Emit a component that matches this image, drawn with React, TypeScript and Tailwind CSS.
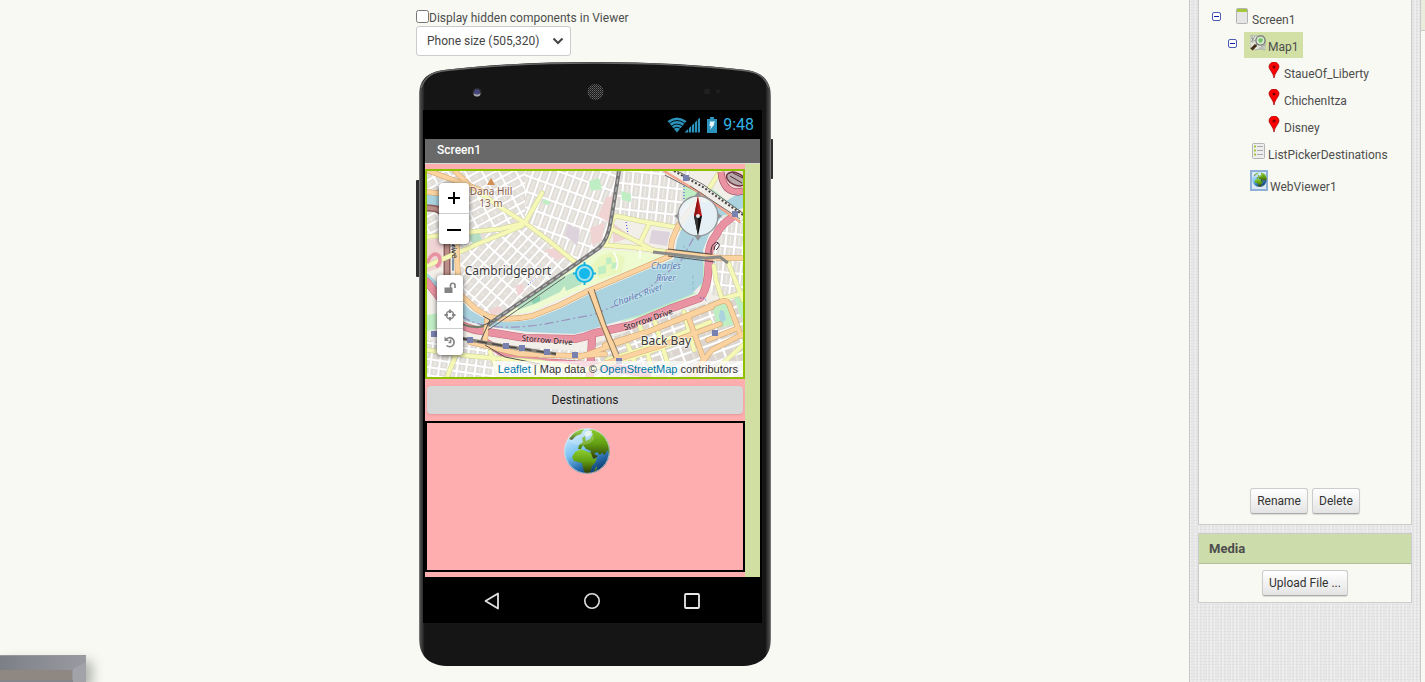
import React from "react";

function PhoneShell() {
  return (
    <svg viewBox="416 62 357 604" className="absolute inset-0 h-full w-full" aria-hidden="true">
      <defs>
        <linearGradient id="shell-edge" x1="0" x2="1" y1="0" y2="0">
          <stop offset="0" stopColor="#8a8a8a" />
          <stop offset="0.004" stopColor="#4a4a4a" />
          <stop offset="0.012" stopColor="#2a2a2a" />
          <stop offset="0.016" stopColor="#151515" />
          <stop offset="0.984" stopColor="#151515" />
          <stop offset="0.988" stopColor="#2a2a2a" />
          <stop offset="0.996" stopColor="#4a4a4a" />
          <stop offset="1" stopColor="#8a8a8a" />
        </linearGradient>
        <pattern id="speaker" width="2" height="2" patternUnits="userSpaceOnUse">
          <rect width="2" height="2" fill="#181818" />
          <rect width="1" height="1" fill="#6a6a6a" />
          <rect x="1" y="1" width="1" height="1" fill="#4a4a4a" />
        </pattern>
      </defs>
      <rect x="416" y="180" width="4" height="97" rx="1" fill="#2e2e2e" />
      <rect x="769" y="139" width="4" height="40" rx="1" fill="#2e2e2e" />
      <path
        d="M419 96C419 80 427 72 444 70Q510 62 595 62Q680 62 746 70C763 72 771 82 771 96V638C771 655 762 665 744 666H446C428 665 419 655 419 638Z"
        fill="url(#shell-edge)"
      />
      <path d="M421 88C425 76 433 72 446 70.500Q512 63 595 63Q678 63 744 70.500C757 72 765 76 769 88" fill="none" stroke="#666" strokeWidth="1.500" />
      <circle cx="477" cy="92.500" r="4.500" fill="#2c2c30" />
      <circle cx="477" cy="92" r="2.800" fill="#45457e" />
      <path d="M473.500 93A3.500 3.500 0 0 0 480.500 93Q477 96 473.500 93Z" fill="#a9a9b4" />
      <circle cx="595.500" cy="92" r="8" fill="url(#speaker)" />
      <circle cx="707" cy="91.500" r="3" fill="#202020" />
      <circle cx="718" cy="91.500" r="2" fill="#202020" />
    </svg>
  );
}

const YELLOW_ROADS = [
  "M470 186L500 207L525 223L548 240L576 263",
  "M542 193L534 207L525 223",
  "M525 223L500 229L470 232L427 237",
  "M522 226L480 243L427 266",
  "M680 228L640 221L617 216Q611 217 611 230L605 245",
  "M610 228L640 243L654 251",
  "M649 224L640 243",
  "M605 245L630 247L668 252",
  "M720 171L707 192",
  "M743 293L722 299L716 280L714 266",
  "M728 262L743 300",
  "M628 345L634 360",
  "M607 360L640 350L710 322",
  "M585 370L630 358L690 338",
  "M655 322L668 365",
  "M684 312L694 350",
  "M640 326L654 377",
  "M710 375L743 345",
  "M447 377L458 350",
  "M427 350L470 356L540 362L580 368",
  "M490 352L500 377",
  "M540 362L536 377",
];

const ORANGE_ROADS = [
  "M429 171L480 190",
  "M455 171L470 186",
  "M427 192L444 194L456 225L458 280",
  "M463 297L476 309L489 317Q510 321 532 316L560 305L588 291L642 268L670 256L672 240L678 226L700 197",
  "M668 252L700 256L720 258L743 258",
  "M591 290L603 325L617 358",
  "M487 319L485 342",
  "M580 357L640 335L720 302Q726 299 729 304L741 336",
  "M605 345L650 331L712 307",
  "M688 316L704 360",
  "M708 340L738 328",
  "M600 365L660 346L720 324",
  "M690 377L712 350L743 334",
  "M470 342L520 354L577 356L605 354",
];

const PINK_ROADS = [
  "M427 282L440 298L452 318Q462 329 488 332L525 338L575 339Q586 337 595 333L632 325L672 308L700 298Q706 292 708 275L709 258Q708 245 716 235Q722 222 738 214",
  "M485 342L505 354L540 362L600 366L650 374",
  "M592 338L590 377",
];

const STATIONS = [
  [434, 334], [470, 340], [506, 346], [522, 348], [547, 352], [575, 355],
  [619, 361], [715, 333], [686, 178], [735, 214],
];

const RAILWAY = "M619 171L611 220Q608 240 599 248L560 275L502 315L488 325";

function StreetPattern({ id, angle, w, h, fill = "#e3dfda" }: { id: string; angle: number; w: number; h: number; fill?: string }) {
  return (
    <pattern id={id} width={w} height={h} patternUnits="userSpaceOnUse" patternTransform={`rotate(${angle})`}>
      <rect width={w} height={h} fill="#fff" />
      <rect x="1.400" y="1.400" width={w - 2.800} height={h - 2.800} fill={fill} stroke="#cfcbc5" strokeWidth="0.500" />
      <path d={`M${w / 2} 2V${h - 2}`} stroke="#f2efe9" strokeWidth="1" />
    </pattern>
  );
}

function MapDrawing() {
  return (
    <svg viewBox="427 171 316 206" preserveAspectRatio="xMidYMid slice" className="absolute inset-0 h-full w-full" role="img" aria-label="Map of Cambridgeport and Back Bay">
      <defs>
        <StreetPattern id="st-west" angle={-48} w={16} h={8} />
        <StreetPattern id="st-mid" angle={20} w={8} h={15} />
        <StreetPattern id="st-north" angle={-28} w={15} h={8} />
        <StreetPattern id="st-grid" angle={6} w={9} h={13} />
        <StreetPattern id="st-bay" angle={-20} w={20} h={9} fill="#dcd5cf" />
        <StreetPattern id="st-south" angle={8} w={9} h={8} />
      </defs>
      <rect x="427" y="171" width="316" height="206" fill="#f2efe9" />
      <path d="M427 171H530L525 223L427 237Z" fill="url(#st-north)" />
      <path d="M525 171H619L608 245L578 264L525 223Z" fill="url(#st-mid)" />
      <path d="M458 237L525 223L578 264L490 322L458 290Z" fill="url(#st-west)" />
      <path d="M619 171H690L680 227L613 217Z" fill="url(#st-grid)" />
      <path d="M427 340L590 352V377H427Z" fill="url(#st-south)" />
      <path d="M590 345L743 290V377H590Z" fill="url(#st-bay)" />
      <path d="M715 218L743 212V300L712 295L707 262Z" fill="url(#st-grid)" />

      <g fill="#f0d4d3">
        <path d="M606 197L614 196L611 224L598 216Z" />
        <path d="M590 228L605 222L602 241L592 245Z" />
        <path d="M613 223L632 237L613 243Z" />
        <path d="M544 250L560 247L570 256L556 260Z" />
        <path d="M427 240L443 238L442 267L427 272Z" />
        <path d="M515 286L523 283L524 291L518 296Z" />
        <path d="M722 171H743V191L728 185Z" />
        <path d="M488 310L500 306L503 311L492 316Z" />
      </g>
      <g fill="#ddd3dc">
        <path d="M568 224L580 230L577 246L565 235Z" />
        <path d="M652 230L670 232L667 246L649 243Z" />
      </g>
      <path d="M567 268L605 249L640 252L664 256L640 266L588 287L530 312L502 316Z" fill="#eefad0" />
      <path d="M600 256L612 252L625 257L622 272L600 279L590 268Z" fill="#e9f6bd" />
      <g fill="#c0eec4">
        <path d="M589 181L599 178L602 189L591 191Z" />
        <path d="M544 199L551 202L548 205L542 203Z" />
        <path d="M621 191L631 194V202L622 200Z" />
        <path d="M683 182L707 190L697 205L684 203Z" />
        <path d="M640 312L690 292L697 293L672 304L640 317L620 322Z" />
        <path d="M703 250L705 282L700 290L701 262Z" />
        <path d="M708 185L738 210L728 217L706 202Z" />
        <path d="M712 305L730 300L737 324L717 328Z" />
        <path d="M734 297L743 295V317L740 316Z" />
        <path d="M427 315L440 313L446 327L427 331Z" />
        <path d="M606 258L611 257L612 263L606 265ZM598 267L606 265V273L598 275ZM612 263L618 262L617 268L611 269Z" />
      </g>
      <path d="M470 235L479 232L482 240L475 244L470 241Z" fill="#b6dfc6" />
      <g fill="#b5e3c3">
        <path d="M517 302L560 278L568 281L560 292L535 304L518 310Z" />
        <path d="M562 277L574 272L582 284L566 291Z" />
      </g>
      <path d="M531 300L540 296L540 301L533 304Z" fill="#86cfae" />

      <path
        d="M427 273L445 290L457 296L470 310L487 320Q510 325 534 319L562 308L590 294L644 271L674 259L677 240L682 228L700 202L722 204L743 190V208L722 216L710 232L703 250L703 282L692 294L640 315L605 325L590 330L575 334L528 332L486 326L465 321L448 302L427 280Z"
        fill="#aad3df"
      />
      <path d="M427 193L438 193L444 199V208L427 212Z" fill="#aad3df" />
      <path d="M720 310L724 311L726 320L721 323L719 317Z" fill="#aad3df" />
      <path d="M462 316Q475 326 500 327Q530 328 560 321L592 315L625 302L650 287L680 262L697 232" fill="none" stroke="#9c91bd" strokeWidth="1.200" strokeDasharray="9 3 2 3" />
      <path d="M684 260V245M693 275V290" stroke="#7fb4c8" strokeWidth="0.700" strokeDasharray="4 2" />

      <g fill="none" strokeLinecap="round" strokeLinejoin="round">
        <path d="M427 208Q441 207 445 217L447 240V285" stroke="#8e5f5c" strokeWidth="7" />
        <path d="M427 208Q441 207 445 217L447 240V285" stroke="#b98d88" strokeWidth="4" />
        <path d="M453 225V270" stroke="#7d93a8" strokeWidth="2" />
        {PINK_ROADS.map((d) => <path key={d} d={d} stroke="#c46a80" strokeWidth="8" />)}
        {PINK_ROADS.map((d) => <path key={d + "f"} d={d} stroke="#e892a2" strokeWidth="7" />)}
        {YELLOW_ROADS.map((d) => <path key={d} d={d} stroke="#cdd096" strokeWidth="5" />)}
        {YELLOW_ROADS.map((d) => <path key={d + "f"} d={d} stroke="#f5f8b6" strokeWidth="4" />)}
        {ORANGE_ROADS.map((d) => <path key={d} d={d} stroke="#cfa268" strokeWidth="5.500" />)}
        {ORANGE_ROADS.map((d) => <path key={d + "f"} d={d} stroke="#fbd3a0" strokeWidth="4.500" />)}
      </g>

      <g fill="none">
        <path d="M667 171L700 188L743 219" stroke="#555" strokeWidth="10" />
        <path d="M667 171L700 188L743 219" stroke="#f0ede8" strokeWidth="8.500" />
        <path d="M664 171L700 193L740 222" stroke="#f3a58f" strokeWidth="2.500" />
        <path d="M674 171L703 187L743 215" stroke="#444" strokeWidth="2" strokeDasharray="2 2" />
        <path d="M690 186L740 219" stroke="#555" strokeWidth="0.800" />
        <path d={RAILWAY} stroke="#777" strokeWidth="4" />
        <path d={RAILWAY} stroke="#b9b9b9" strokeWidth="1.200" strokeDasharray="5 3" />
        <path d="M565 277L500 322L488 330" stroke="#666" strokeWidth="1" />
        <path d="M653 252L705 258L720 257L728 263" stroke="#8a8a86" strokeWidth="3" />
        <path d="M668 249L710 254M668 256L715 262" stroke="#333" strokeWidth="0.800" />
        <path d="M588 291L601 325L614 358M594 289L606 325L619 354" stroke="#6b5a45" strokeWidth="0.800" />
        <path d="M433 333L470 340L510 347L556 354" stroke="#8a837a" strokeWidth="3.500" />
        <path d="M433 333L470 340L510 347L556 354" stroke="#4a4642" strokeWidth="1.500" strokeDasharray="10 5" />
        <path d="M485 345L505 357L540 364" stroke="#555" strokeWidth="1" />
        <path d="M483 316L490 320L481 340M476 328L494 321" stroke="#555" strokeWidth="1" />
        <path d="M452 318Q468 330 484 326" stroke="#6c7f66" strokeWidth="2" />
        <path d="M721 172Q723 192 738 192L743 191" stroke="#8c3d52" strokeWidth="7" />
        <path d="M721 172Q723 192 738 192L743 191" stroke="#e892a2" strokeWidth="6" />
        <ellipse cx="736" cy="179" rx="10" ry="6" transform="rotate(25 736 179)" stroke="#6b3341" strokeWidth="1.500" fill="#b9a9ac" />
        <path d="M730 176L742 183M733 173L743 178" stroke="#4b2932" strokeWidth="1" />
        <path d="M711 255Q710 244 717 242Q722 245 716 250M714 250Q714 245 718 243" stroke="#4f3340" strokeWidth="1" />
        <path d="M427 263Q433 250 439 256Q442 263 436 267" stroke="#e892a2" strokeWidth="3.500" />
        <path d="M684 186V205M626 222L628 234M700 298Q706 297 706 302M528 285L536 278" stroke="#3540e0" strokeWidth="1" strokeDasharray="1 2" />
        <path d="M613 252Q620 260 616 270M640 250V258" stroke="#fff" strokeWidth="1.500" />
      </g>
      {STATIONS.map(([x, y]) => (
        <rect key={`${x}-${y}`} x={x - 3} y={y - 3} width="6" height="6" fill="#7981b0" />
      ))}

      <path d="M491 178L495 185H487Z" fill="#d08f55" />
      <g fontFamily="'Noto Sans', sans-serif" textAnchor="middle" stroke="#fff" strokeOpacity="0.600" strokeWidth="2" paintOrder="stroke">
        <text x="491" y="195" fontSize="10" fill="#8a5b48">Dana Hill</text>
        <text x="491" y="207" fontSize="10" fill="#8a5b48">13 m</text>
        <text x="508" y="275" fontSize="12" fill="#3a3a3a">Cambridgeport</text>
        <text x="666" y="345" fontSize="12" fill="#3a3a3a">Back Bay</text>
        <g fontSize="8" fill="#222" strokeOpacity="0.200">
          <text transform="translate(547 343) rotate(5)">Storrow Drive</text>
          <text transform="translate(649 322) rotate(-19)">Storrow Drive</text>
          <text transform="translate(451 249) rotate(82)">Drive</text>
        </g>
        <g fontSize="9" fontStyle="italic" fill="#5b7fb8" strokeOpacity="0.300">
          <text x="666" y="269">Charles</text>
          <text x="666" y="281">River</text>
          <text transform="translate(639 298) rotate(-20)">Charles River</text>
        </g>
      </g>

      <circle cx="584.500" cy="273.500" r="8.500" fill="#8fdcf2" fillOpacity="0.800" stroke="#14b4e4" strokeWidth="2" />
      <circle cx="584.500" cy="273.500" r="5.500" fill="#14b8ea" />
      <path d="M584.500 262V266M584.500 281V285M573 273.500H577M592 273.500H596" stroke="#14b4e4" strokeWidth="2" />

      <g>
        <path d="M674 216L680 212V220ZM722 216L716 212V220ZM698 241L694 235H702ZM698 191L694 197H702Z" fill="#929292" />
        <circle cx="698" cy="216" r="20" fill="#eff5f9" fillOpacity="0.850" stroke="#909396" strokeWidth="1.300" />
        <path d="M698 196L702 216H694Z" fill="#b51a1a" />
        <path d="M698 196V216H694Z" fill="#8f1414" />
        <path d="M698 236L702 216H694Z" fill="#111" />
        <path d="M698 236V216H694Z" fill="#333" />
        <circle cx="698" cy="216" r="2" fill="#e8e8e8" />
      </g>
    </svg>
  );
}

function MapView() {
  const tool = "flex h-[26px] items-center justify-center bg-white text-[#848484]";
  return (
    <div className="relative h-[210px] overflow-hidden border-2 border-[#8fc000]">
      <MapDrawing />
      <div className="absolute left-3 top-3 flex w-[30px] flex-col gap-px overflow-hidden rounded bg-[#ccc] shadow-[0_1px_5px_rgba(0,0,0,0.65)]">
        <button aria-label="Zoom in" className="flex h-[30px] items-center justify-center bg-white">
          <svg width="14" height="14" viewBox="0 0 14 14" stroke="#000" strokeWidth="2"><path d="M1 7H13M7 1V13" /></svg>
        </button>
        <button aria-label="Zoom out" className="flex h-[30px] items-center justify-center bg-white">
          <svg width="14" height="14" viewBox="0 0 14 14" stroke="#000" strokeWidth="2"><path d="M0 8H14" /></svg>
        </button>
      </div>
      <div className="absolute left-[10px] top-[104px] flex w-[26px] flex-col gap-px overflow-hidden rounded-sm bg-[#ccc] shadow-[0_1px_5px_rgba(0,0,0,0.65)]">
        <button aria-label="Unlock" className={tool}>
          <svg width="12" height="12" viewBox="0 0 12 12" fill="none" stroke="currentColor" strokeWidth="1.700">
            <rect x="0.500" y="5.500" width="8" height="5.500" fill="currentColor" stroke="none" />
            <path d="M6.500 6V3.500A2.200 2.200 0 0 1 11 3.500V6" />
          </svg>
        </button>
        <button aria-label="Center" className={tool}>
          <svg width="12" height="12" viewBox="0 0 12 12" fill="none" stroke="currentColor" strokeWidth="2">
            <circle cx="6" cy="6" r="3.700" strokeWidth="1.500" />
            <path d="M6 0.500V4M6 8V11.500M0.500 6H4M8 6H11.500" />
          </svg>
        </button>
        <button aria-label="Reset" className={tool}>
          <svg width="12" height="12" viewBox="0 0 12 12" fill="none" stroke="currentColor" strokeWidth="1.700">
            <path d="M2 3.500A4.500 4.500 0 1 1 2.500 9.500M6.500 3.500V6.500H4.500" />
            <path d="M0.500 0.500V5H5Z" fill="currentColor" stroke="none" />
          </svg>
        </button>
      </div>
      <p className="absolute bottom-0 right-0 whitespace-nowrap bg-white/70 px-[5px] font-['Liberation_Sans',sans-serif] text-[11px] leading-4 text-[#333]">
        <a href="#leaflet" className="text-[#0078a8]">Leaflet</a> | Map data ©{" "}
        <a href="#osm" className="text-[#0078a8]">OpenStreetMap</a> contributors
      </p>
    </div>
  );
}

interface GlobeProps extends React.SVGProps<SVGSVGElement> {
  id: string;
}

function Globe({ id, ...rest }: GlobeProps) {
  return (
    <svg viewBox="0 0 46 46" aria-hidden="true" {...rest}>
      <defs>
        <linearGradient id={`${id}-sea`} x1="0.200" y1="0" x2="0.700" y2="1">
          <stop offset="0" stopColor="#d9f1ff" />
          <stop offset="0.450" stopColor="#7cc3f3" />
          <stop offset="0.750" stopColor="#2a6fae" />
          <stop offset="1" stopColor="#08305f" />
        </linearGradient>
        <linearGradient id={`${id}-land`} x1="0" y1="0" x2="0" y2="1">
          <stop offset="0" stopColor="#8fd030" />
          <stop offset="0.500" stopColor="#62a012" />
          <stop offset="1" stopColor="#2f3a08" />
        </linearGradient>
        <clipPath id={`${id}-clip`}><circle cx="23" cy="23" r="22.500" /></clipPath>
      </defs>
      <circle cx="23" cy="23" r="22.800" fill={`url(#${id}-sea)`} />
      <g clipPath={`url(#${id}-clip)`} fill={`url(#${id}-land)`}>
        <path d="M25 2L34 0L46 10V28L43 22L41 27L38 25L36 27L33 24L30 26L34 28L30 31L26 26L27 23L22 21L19 17L17 21H14L15 17L19 14L18 10L21 8L22 13L26 11L29 6Z" />
        <path d="M11 24L17 21L24 24L27 25L29 31L33 30L31 35L28 38L26 45H21L19 40L18 35L10 33L8 29Z" />
        <path d="M5 11L11 3L20 1L17 6L12 8L8 12Z" />
        <path d="M31 41L33 38L32 43L30 44Z" />
        <path d="M20 6L24 2L28 3L27 7L23 9Z" fill="#dff0ee" />
      </g>
      <ellipse cx="17" cy="10" rx="13" ry="7" fill="#fff" opacity="0.200" />
      <circle cx="23" cy="23" r="22.300" fill="none" stroke="#e4f0e6" strokeOpacity="0.600" />
    </svg>
  );
}

function StatusBar() {
  return (
    <div className="flex h-[29px] items-center justify-end pr-2 text-[#33b5e5]">
      <svg width="34" height="16" viewBox="0 0 34 16" aria-hidden="true">
        <path d="M10 15.500L0.500 4Q10 -3 19.500 4Z" fill="#2b93bb" />
        <path d="M2 6.500Q10 0.500 18 6.500M4 9.500Q10 4.500 16 9.500M6 12Q10 8.500 14 12" fill="none" stroke="#000" strokeWidth="0.900" />
        <path d="M17.500 15.500L33 0.500V15.500Z" fill="#2b93bb" />
        <path d="M21.500 16V8M24.500 16V6M27.500 16V3M30.500 16V0" stroke="#000" strokeWidth="0.800" />
      </svg>
      <svg width="10" height="16" viewBox="0 0 10 16" className="ml-[6px]" aria-hidden="true">
        <path d="M3 0H7V2H10V16H0V2H3Z" fill="#2b93bb" />
        <path d="M3 4.500H8L6.500 7.500H7.500L3 12.500L4 9H2.500Z" fill="#e8f6fb" />
      </svg>
      <span className="ml-[6px] text-[16px] leading-5">9:48</span>
    </div>
  );
}

function NavBar() {
  const key = "flex h-6 w-6 items-center justify-center";
  return (
    <div className="flex h-[46px] items-center justify-center gap-[76px] pr-px pt-px">
      <button aria-label="Back" className={key}>
        <svg width="16" height="18" viewBox="0 0 16 18" fill="none" stroke="#e0e0e0" strokeWidth="1.800"><path d="M14 1.500V16.500L1.500 9Z" strokeLinejoin="round" /></svg>
      </button>
      <button aria-label="Home" className={key}>
        <svg width="18" height="18" viewBox="0 0 18 18" fill="none" stroke="#e0e0e0" strokeWidth="1.600"><circle cx="9" cy="9" r="7.200" /></svg>
      </button>
      <button aria-label="Overview" className={key}>
        <svg width="18" height="18" viewBox="0 0 18 18" fill="none" stroke="#e8e8e8" strokeWidth="1.800"><rect x="2" y="2" width="14" height="14" rx="1" /></svg>
      </button>
    </div>
  );
}

function Phone() {
  return (
    <div className="relative mt-[6px] px-[7px] pb-[43px] pt-12">
      <PhoneShell />
      <div className="relative mr-1 bg-black">
        <StatusBar />
        <div className="mx-[2px]">
          <h1 className="h-6 bg-[#696969] pl-3 text-[12px] font-medium leading-[22px] text-white">Screen1</h1>
          <div className="border-t border-[#dcdcd4] bg-[#d2dfa2] pr-[15px]">
            <div className="flex flex-col bg-[#ffaeb0] pb-[5px] pt-[5px]">
              <MapView />
              <button className="mx-[2px] mb-[7px] mt-[7px] h-7 rounded-sm bg-[#d6d7d7] text-[12px] leading-7 text-[#222] shadow-sm">
                Destinations
              </button>
              <div className="flex h-[151px] justify-center border-2 border-black pl-1 pt-[5px]">
                <Globe id="view-globe" className="h-[46px] w-[46px]" />
              </div>
            </div>
          </div>
        </div>
        <NavBar />
      </div>
    </div>
  );
}

function Toggle({ label }: { label: string }) {
  return (
    <button aria-label={label} className="mt-[7px] h-[9px] w-[9px] shrink-0">
      <svg width="9" height="9" viewBox="0 0 9 9">
        <rect x="0.500" y="0.500" width="8" height="8" rx="1.500" fill="#fff" stroke="#4a5cb4" />
        <path d="M2 4.500H7" stroke="#1020b0" />
      </svg>
    </button>
  );
}

const ScreenIcon = () => (
  <svg width="16" height="16" viewBox="0 0 16 16">
    <rect x="2.500" y="0.500" width="11" height="15" rx="1" fill="#e6e6e6" stroke="#b4b4b4" />
    <rect x="3" y="1" width="10" height="3" fill="#a6c639" />
  </svg>
);

const MapIcon = () => (
  <svg width="16" height="16" viewBox="0 0 16 16">
    <path d="M0 1L4 0L8 1L13 0L15 5V15L10 14L5 15L0 13Z" fill="#e2e4d8" stroke="#999" strokeWidth="0.600" />
    <path d="M1 3L5 6M2 1L3 8M5 1L1 7M11 12L15 10M9 13L14 13" stroke="#8a9288" strokeWidth="0.800" />
    <circle cx="10.500" cy="5.500" r="4.600" fill="#d3e9c8" stroke="#777" strokeWidth="1.300" />
    <path d="M8 5L10 3L13 4L12 7L10 8Z" fill="#73c06b" />
    <path d="M7.500 8.500L5.500 11" stroke="#888" strokeWidth="2" />
    <path d="M6 10L1.500 14.500" stroke="#4a2e18" strokeWidth="3" />
  </svg>
);

const PinIcon = () => (
  <svg width="16" height="16" viewBox="0 0 16 16">
    <path d="M8 16Q7.500 12.500 5 9Q3 6.500 3 4.800A5 4.800 0 0 1 13 4.800Q13 6.500 11 9Q8.500 12.500 8 16Z" fill="#f00" stroke="#9c0000" strokeWidth="0.700" />
    <circle cx="8" cy="5" r="1.600" fill="#7c0000" />
  </svg>
);

const ListIcon = () => (
  <svg width="16" height="16" viewBox="0 0 16 16">
    <rect x="2.500" y="0.500" width="12" height="15" rx="1" fill="#eee" stroke="#b4b4b4" />
    <path d="M4 3.500H6M4 7.500H6M4 11.500H6" stroke="#a6c639" strokeWidth="2" />
    <path d="M7 3.500H13M7 7.500H13M7 11.500H13" stroke="#aaa" />
  </svg>
);

const WebIcon = () => (
  <svg width="18" height="21" viewBox="0 0 18 21">
    <rect x="1" y="1" width="16" height="19" fill="#dbe8f6" stroke="#8fb0d8" strokeWidth="2" />
    <Globe id="tree-globe" x="2" y="2" width="15" height="15" />
  </svg>
);

interface NodeProps {
  name: string;
  icon: React.ReactNode;
  selected?: boolean;
  toggle?: boolean;
  children?: React.ReactNode;
}

function TreeNode({ name, icon, selected, toggle, children }: NodeProps) {
  return (
    <li className="mb-px">
      <div className="flex min-h-[26px]">
        <span className="flex w-4 shrink-0">{toggle && <Toggle label={`Collapse ${name}`} />}</span>
        <a
          href={`#${name}`}
          className={selected ? "flex items-baseline gap-[2px] bg-[#d2e0a6] pl-[6px] pr-1 pt-[3px]" : "flex items-baseline gap-[2px] pl-[6px] pr-1 pt-[3px]"}
        >
          {icon}
          <span className="text-[12px] leading-4">{name}</span>
        </a>
      </div>
      {children && <ul className="ml-4 mt-px">{children}</ul>}
    </li>
  );
}

const BUTTON =
  "h-[26px] rounded-[3px] border border-[#ccc] border-b-[#aaa] bg-linear-to-b from-white to-[#e4e4e4] px-[6px] text-[12px] leading-6 text-[#333] shadow-[0_1px_1px_rgba(0,0,0,0.12)]";

const LINEN =
  "bg-[#e9e9e9] bg-[radial-gradient(circle,#dadada_30%,transparent_50%),linear-gradient(90deg,#ededed_50%,#e6e6e6_50%)] bg-size-[3px_3px,4px_4px]";

function Sidebar() {
  return (
    <aside className={`flex w-[232px] shrink-0 flex-col gap-2 border-x border-[#c9c9c9] px-2 ${LINEN}`}>
      <section className="flex h-[525px] flex-col justify-between border border-t-0 border-[#ccc] bg-[#f8f9f3] pb-[10px] pl-[13px] pt-[5px]">
        <ul>
          <TreeNode name="Screen1" icon={<ScreenIcon />} toggle>
            <TreeNode name="Map1" icon={<MapIcon />} selected toggle>
              <TreeNode name="StaueOf_Liberty" icon={<PinIcon />} />
              <TreeNode name="ChichenItza" icon={<PinIcon />} />
              <TreeNode name="Disney" icon={<PinIcon />} />
            </TreeNode>
            <TreeNode name="ListPickerDestinations" icon={<ListIcon />} />
            <TreeNode name="WebViewer1" icon={<WebIcon />} />
          </TreeNode>
        </ul>
        <div className="flex justify-center gap-1 pr-[13px]">
          <button className={BUTTON}>Rename</button>
          <button className={BUTTON}>Delete</button>
        </div>
      </section>
      <section className="border border-[#ccc] bg-[#f8f9f3]">
        <h2 className="h-[30px] border-b border-[#b3bf98] bg-[#ccdcaa] pl-[10px] text-[13px] font-bold leading-[29px]">Media</h2>
        <div className="flex justify-center py-[6px]">
          <button className={BUTTON}>Upload File ...</button>
        </div>
      </section>
    </aside>
  );
}

function Viewer() {
  return (
    <main className="relative min-w-0 flex-1">
      <div className="mx-auto w-[357px] pt-[10px]">
        <label className="flex h-4 items-start">
          <input type="checkbox" className="h-[13px] w-[13px]" />
          <span className="text-[12px] leading-[17px]">Display hidden components in Viewer</span>
        </label>
        <div className="relative w-[155px]">
          <select
            aria-label="Preview size"
            className="block h-[30px] w-full appearance-none rounded-[3px] border border-[#ccc] bg-white pl-[10px] text-[12px] text-[#444]"
          >
            <option>Phone size (505,320)</option>
          </select>
          <svg width="12" height="8" viewBox="0 0 12 8" className="pointer-events-none absolute right-[7px] top-[11px]" fill="none" stroke="#444" strokeWidth="2">
            <path d="M1.500 1.500L6 6L10.500 1.500" />
          </svg>
        </div>
        <Phone />
      </div>
      <div className="absolute bottom-0 left-0 h-[27px] w-[86px] border-t border-[#96989a] bg-[#8b8c92] shadow-[6px_6px_12px_rgba(60,70,60,0.4)]">
        <svg viewBox="0 0 86 26" className="h-full w-full" aria-hidden="true">
          <defs>
            <linearGradient id="thumb" x1="0" x2="1"><stop offset="0" stopColor="#7d7f87" /><stop offset="1" stopColor="#9a9ba1" /></linearGradient>
          </defs>
          <rect width="86" height="26" fill="url(#thumb)" />
          <path d="M0 14H72V24H0Z" fill="#8f8782" />
          <path d="M0 24H73V26H0Z" fill="#85868b" />
          <path d="M73 13L86 6V26H73Z" fill="#a2a3a9" />
        </svg>
      </div>
    </main>
  );
}

export default function App() {
  return (
    <div className="flex min-h-screen overflow-hidden bg-[#f8f9f3] font-[Roboto,sans-serif] text-[#4d4d4d]">
      <Viewer />
      <Sidebar />
      <div className="w-1 shrink-0">
        <div className="h-[31px] border-b border-[#ccc] bg-[#e9eddc]" />
      </div>
    </div>
  );
}
